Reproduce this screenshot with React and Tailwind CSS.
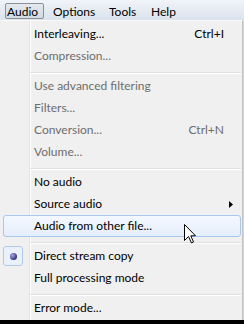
const MENU = [
  { label: 'Interleaving...', shortcut: 'Ctrl+I' },
  { label: 'Compression...', disabled: true },
  'sep',
  { label: 'Use advanced filtering', disabled: true },
  { label: 'Filters...', disabled: true },
  { label: 'Conversion...', shortcut: 'Ctrl+N', disabled: true },
  { label: 'Volume...', disabled: true },
  'sep',
  { label: 'No audio' },
  { label: 'Source audio', submenu: true },
  { label: 'Audio from other file...', hover: true },
  'sep',
  { label: 'Direct stream copy', checked: true },
  { label: 'Full processing mode' },
  'sep',
  { label: 'Error mode...' },
]

function Separator() {
  return (
    <div className="h-[8px] ml-[30px] mr-[1px] pt-[5px]">
      <div className="h-px bg-[#e0e0e0]" />
      <div className="h-px bg-white" />
    </div>
  )
}

function MenuRow({ item }) {
  const rowCls = item.hover
    ? 'border-[#a8c8ef] bg-[linear-gradient(to_bottom,#f4f8fe,#e4eefb)]'
    : 'border-transparent'
  const textCls = item.disabled ? 'text-[#6d6d6d]' : 'text-black'
  return (
    <div className={`h-[22px] ml-[3px] mr-[1px] flex items-center border rounded-[3px] ${rowCls}`}>
      <div className="w-[30px] h-[20px] flex">
        {item.checked && (
          <div className="-ml-px w-[20px] h-[20px] rounded-[3px] border border-[#aecbef] bg-[#eaf1fb] flex items-center justify-center">
            <div className="w-[7px] h-[7px] rounded-full bg-[radial-gradient(circle_at_35%_35%,#a6a6e0,#2c2c7a_75%)]" />
          </div>
        )}
      </div>
      <div className={`flex-1 leading-[20px] ${textCls}`}>{item.label}</div>
      {item.shortcut && <div className={`leading-[20px] ${textCls}`}>{item.shortcut}</div>}
      <div className="w-[16px] h-[20px] flex items-center pl-[5px]">
        {item.submenu && (
          <svg width="4" height="7" viewBox="0 0 4 7">
            <path d="M0 0 L4 3.5 L0 7 Z" fill="#000" />
          </svg>
        )}
      </div>
    </div>
  )
}

export default function App() {
  return (
    <div className="w-[244px] h-[324px] relative overflow-hidden bg-[#d4d4d4] font-['Lato',sans-serif] text-[12px]">
      {/* menu bar */}
      <div className="h-[20px] flex items-start bg-[linear-gradient(to_bottom,#f1f4f8,#dae2ec)] text-black">
        <div className="ml-[5px] mt-[3px] w-[39px] h-[16px] border border-[#8b9097] rounded-[2px] bg-[linear-gradient(to_bottom,#e4e9ef,#d2d9e2)] pl-[1px] pt-[1px] leading-[14px]">
          Audio
        </div>
        <div className="ml-[9px] w-[56px] mt-[3px] leading-[18px]">Options</div>
        <div className="w-[42px] mt-[3px] leading-[18px]">Tools</div>
        <div className="mt-[3px] leading-[18px]">Help</div>
      </div>

      {/* dropdown */}
      <div className="w-[243px] h-[300px] border-t border-t-[#f7f9fb] border-r border-r-[#c4c4c4] pt-[2px] bg-[linear-gradient(to_right,#f0f0f0_29px,#e2e3e3_29px,#e2e3e3_30px,#ffffff_30px,#ffffff_31px,#f0f0f0_31px)]">
        {MENU.map((item, i) =>
          item === 'sep' ? <Separator key={i} /> : <MenuRow key={i} item={item} />
        )}
      </div>
      <div className="h-[4px] bg-black" />

      {/* mouse pointer */}
      <svg className="absolute left-[184px] top-[224px]" width="13" height="20" viewBox="0 0 13 20">
        <path
          d="M0.5 0.5 V16.5 L4.5 12.5 L7.5 19 L9.5 18 L6.8 11.8 H11.5 Z"
          fill="#fff"
          stroke="#000"
          strokeWidth="1"
          strokeLinejoin="miter"
        />
      </svg>
    </div>
  )
}
